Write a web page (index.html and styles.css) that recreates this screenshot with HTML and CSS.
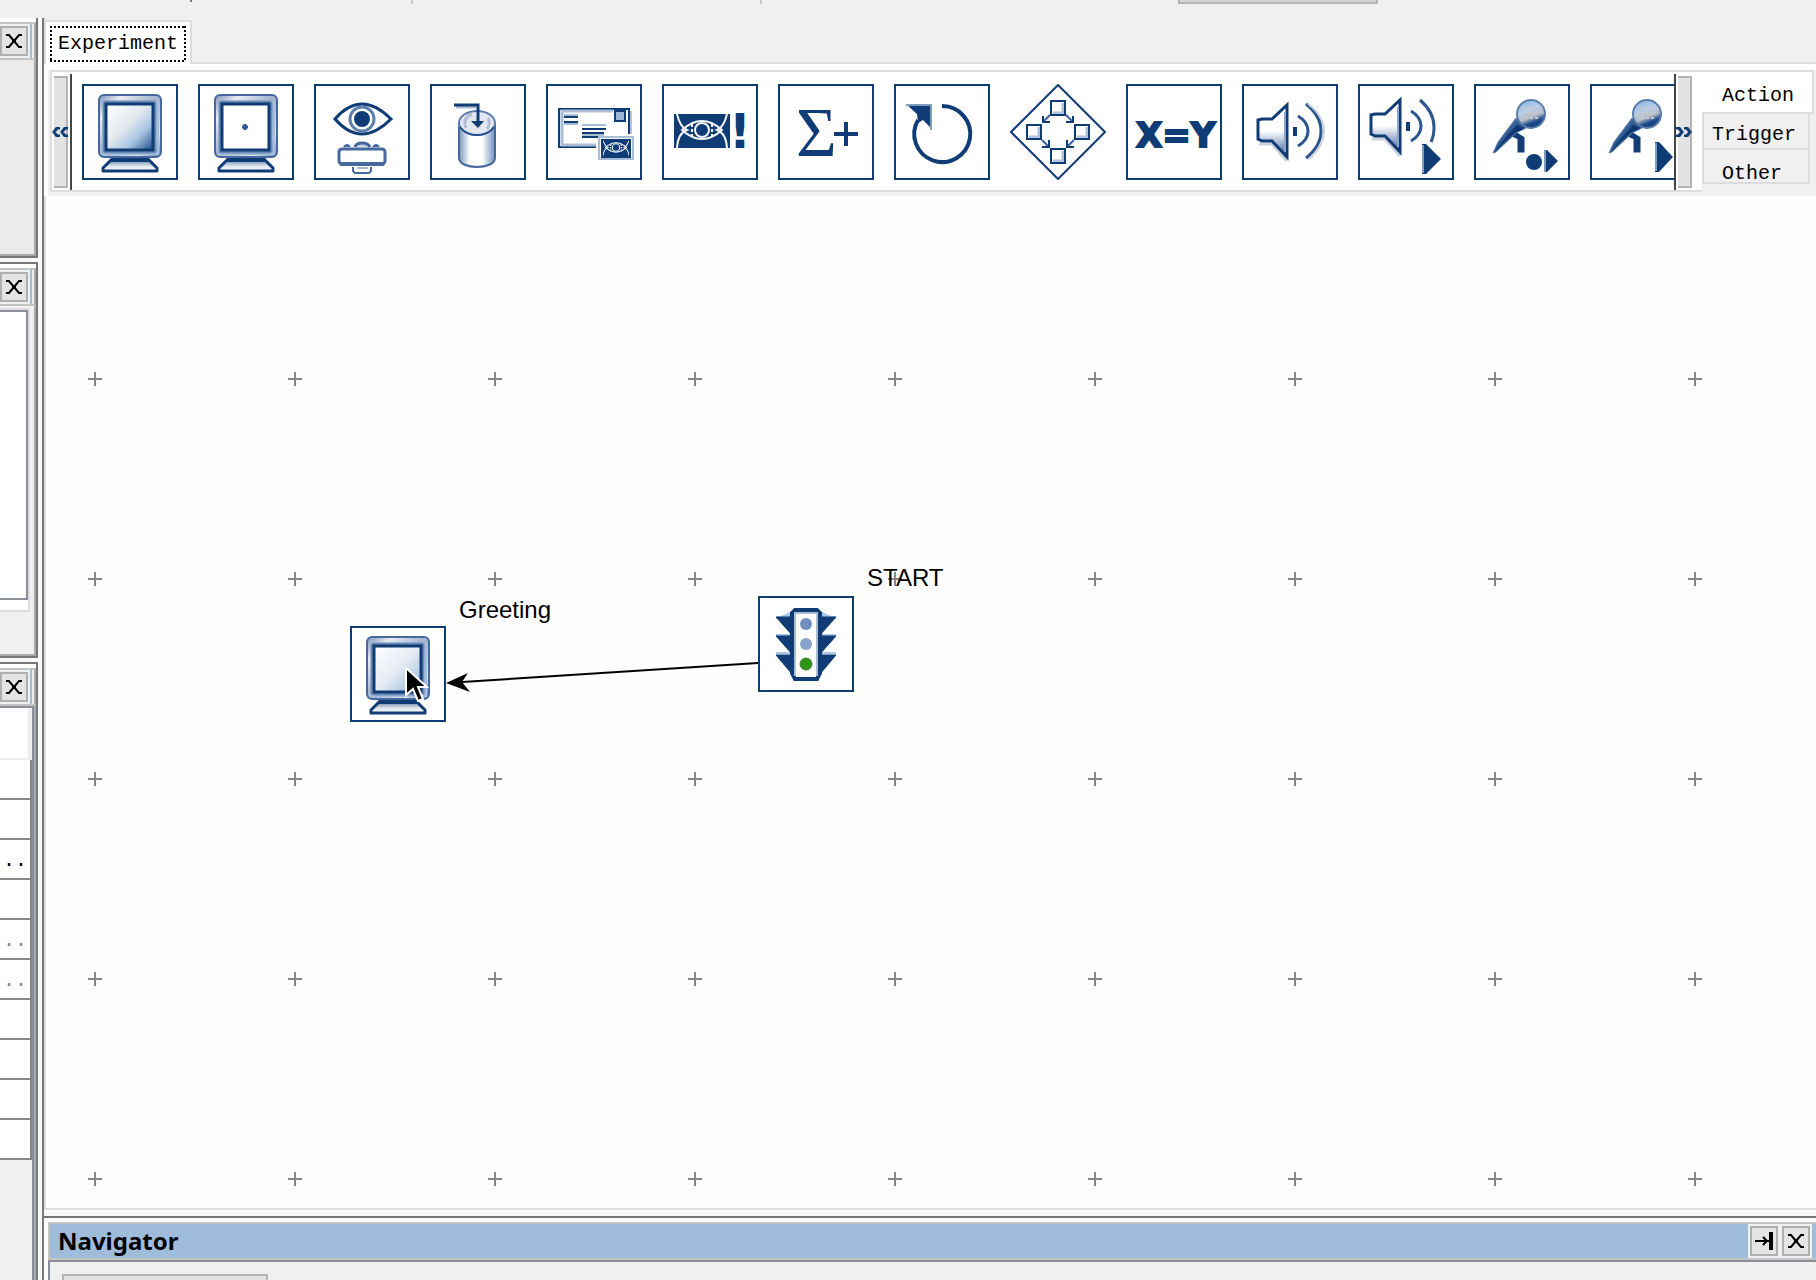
FILE: index.html
```html
<!DOCTYPE html>
<html lang="en">
<head>
<meta charset="utf-8">
<title>Experiment</title>
<link rel="stylesheet" href="styles.css">
</head>
<body>
<svg class="defs" aria-hidden="true">
  <defs>
    <linearGradient id="frame" x1="0" y1="0" x2="1" y2="1">
      <stop offset="0" stop-color="#7f93b8"/><stop offset=".2" stop-color="#e9ebf2"/><stop offset=".5" stop-color="#9fb2d0"/><stop offset=".8" stop-color="#dfe6f0"/><stop offset="1" stop-color="#5f86b5"/>
    </linearGradient>
    <linearGradient id="screen" x1="0" y1="0" x2="1" y2="1">
      <stop offset="0" stop-color="#ffffff"/><stop offset=".45" stop-color="#e3e9ef"/><stop offset=".7" stop-color="#a9c5e2"/><stop offset="1" stop-color="#1c4a86"/>
    </linearGradient>
    <linearGradient id="screen-light" x1="0" y1="0" x2="1" y2="1">
      <stop offset="0" stop-color="#ffffff"/><stop offset=".5" stop-color="#e6ecf4"/><stop offset="1" stop-color="#8fb4dc"/>
    </linearGradient>
    <linearGradient id="base" x1="0" y1="0" x2="0" y2="1">
      <stop offset="0" stop-color="#54759f"/><stop offset=".6" stop-color="#dfe5ee"/><stop offset="1" stop-color="#ffffff"/>
    </linearGradient>
    <linearGradient id="can" x1="0" y1="0" x2="1" y2="0">
      <stop offset="0" stop-color="#7b96bd"/><stop offset=".3" stop-color="#ffffff"/><stop offset=".65" stop-color="#ffffff"/><stop offset="1" stop-color="#6f8fb9"/>
    </linearGradient>
    <linearGradient id="cone" x1="0" y1="0" x2="0" y2="1">
      <stop offset="0" stop-color="#ffffff"/><stop offset=".5" stop-color="#ffffff"/><stop offset=".85" stop-color="#6f8cb8"/><stop offset="1" stop-color="#1d4880"/>
    </linearGradient>
    <linearGradient id="mic-head" x1=".3" y1="0" x2=".7" y2="1">
      <stop offset="0" stop-color="#8fb9e6"/><stop offset=".35" stop-color="#b6cde6"/><stop offset=".6" stop-color="#b9bdc6"/><stop offset=".78" stop-color="#1d4d8c"/><stop offset="1" stop-color="#0e3a75"/>
    </linearGradient>
    <linearGradient id="mic-body" x1="0" y1="0" x2="1" y2="1">
      <stop offset="0" stop-color="#7fa6d2"/><stop offset=".6" stop-color="#123f7a"/>
    </linearGradient>
    <pattern id="grid" width="200" height="200" patternUnits="userSpaceOnUse" x="-51" y="83">
      <path d="M93 100H107M100 93V107" stroke="#868686" stroke-width="2"/>
    </pattern>
  </defs>
  <symbol id="monitor" viewBox="2 2 92 92">
    <path d="M30 75H66L75 84V87H21V84Z" fill="url(#base)" stroke="#103c76" stroke-width="3" stroke-linejoin="round"/>
    <path d="M29 76H67" stroke="#103c76" stroke-width="4"/>
    <rect x="17" y="11" width="62" height="62" rx="5" fill="url(#frame)" stroke="#45699c" stroke-width="2"/>
    <path d="M20 70H76V16" fill="none" stroke="#a5bedd" stroke-width="2"/>
    <rect x="22" y="18" width="51" height="50" rx="2" fill="none" stroke="#6b8bb8" stroke-width="3"/>
  </symbol>
  <symbol id="speaker" viewBox="2 2 92 92" overflow="visible">
    <path d="M17 60H30L45 77" fill="none" stroke="#ccd2dc" stroke-width="3"/>
    <path d="M16 36L20 35H30L45 21V73L30 57H20L16 55Z" fill="url(#cone)" stroke="#103c76" stroke-width="3"/>
    <path d="M43 28V68" stroke="#8da5c8" stroke-width="2"/>
    <path d="M53 43V52" stroke="#103c76" stroke-width="4"/>
    <path d="M56 32Q66 38 66 47T56 62" fill="none" stroke="#2b568f" stroke-width="3"/>
  </symbol>
  <symbol id="mic" viewBox="2 2 92 92">
    <path d="M41 49L49 54V67H45V54L38 51Z" fill="#123f7a" stroke="#123f7a" stroke-width="3"/>
    <path d="M19 69L24 58L42 34L52 44L42 49L22 68Z" fill="url(#mic-body)" stroke="#5f82b0" stroke-width="1"/>
    <path d="M22 65L43 41L49 45L40 49Z" fill="#0d356e"/>
    <circle cx="57" cy="30" r="14" fill="url(#mic-head)" stroke="#5a7cab" stroke-width="2"/>
    <path d="M49 24H64M50 29H66M51 34H64" stroke="#c6c7c9" stroke-width="2" stroke-dasharray="3 2"/>
  </symbol>
  <symbol id="mask" viewBox="0 0 56 34">
    <path d="M0 0H56V34H0Z" fill="#103c76"/>
    <g fill="none" stroke="#f4f7fb" stroke-width="2">
      <path d="M3 0Q6 13 13 16Q4 19 3 34M53 0Q50 13 43 16Q52 19 53 34"/>
      <path d="M8 16Q18 7 28 7T48 16Q38 25 28 25T8 16Z"/>
      <circle cx="28" cy="16" r="7"/>
      <path d="M18 10V22M38 10V22" stroke-dasharray="3 2"/>
    </g>
  </symbol>
  <symbol id="close" viewBox="0 0 16 14"><path d="M0 1H3L13 13H16M0 13H3L13 1H16" fill="none" stroke="#000" stroke-width="2"/><path d="M6 7H10" stroke="#000" stroke-width="4"/></symbol>
  <symbol id="chevrons" viewBox="0 0 16 10"><path d="M8 1H5L2 5L5 9H8M16 1H13L10 5L13 9H16" fill="none" stroke="#103c76" stroke-width="3"/></symbol>
</svg>

<header class="topbar">
  <i class="tick"></i><i class="tick faint"></i><i class="tick faint"></i>
  <button class="topbar-button" aria-label="Toolbar option"></button>
</header>

<div class="workspace">
  <aside class="sidebar">
    <section class="dock dock-first">
      <div class="dock-title"><button class="square" aria-label="Close"><svg class="x"><use href="#close"/></svg></button></div>
      <div class="dock-body"></div>
    </section>
    <section class="dock dock-list">
      <div class="dock-title"><button class="square" aria-label="Close"><svg class="x"><use href="#close"/></svg></button></div>
      <div class="dock-body"><div class="list-frame"><div class="list"></div></div></div>
    </section>
    <section class="dock dock-props">
      <div class="dock-title"><button class="square" aria-label="Close"><svg class="x"><use href="#close"/></svg></button></div>
      <div class="dock-body">
        <div class="props-head"></div>
        <table class="props">
          <tbody>
            <tr><td></td></tr>
            <tr><td></td></tr>
            <tr><td>..</td></tr>
            <tr><td></td></tr>
            <tr><td class="muted">..</td></tr>
            <tr><td class="muted">..</td></tr>
            <tr><td></td></tr>
            <tr><td></td></tr>
            <tr><td></td></tr>
            <tr><td></td></tr>
          </tbody>
        </table>
      </div>
    </section>
  </aside>

  <main class="main">
    <div class="tabs">
      <button class="tab"><span class="tab-focus">Experiment</span></button>
      <div class="tabs-rest"></div>
    </div>

    <div class="palette">
      <div class="strip">
        <button class="scroll scroll-left" aria-label="Scroll left"><svg class="chev"><use href="#chevrons"/></svg></button>
        <div class="track">
          <button class="tool" aria-label="Display"><svg viewBox="2 2 92 92"><use href="#monitor" x="2" y="2" width="92" height="92"/><rect x="24" y="20" width="47" height="46" fill="url(#screen)" stroke="#103c76" stroke-width="3"/></svg></button>
          <button class="tool" aria-label="Fixation point"><svg viewBox="2 2 92 92"><use href="#monitor" x="2" y="2" width="92" height="92"/><rect x="24" y="20" width="47" height="46" fill="#fff" stroke="#103c76" stroke-width="3"/><path d="M44 43H50M47 40V46" stroke="#2c5790" stroke-width="3"/></svg></button>
          <button class="tool" aria-label="Eye tracker"><svg viewBox="2 2 92 92">
            <path d="M21 35Q34 20 48 20T77 35Q62 50 48 50T21 35Z" fill="#fff" stroke="#103c76" stroke-width="3"/>
            <circle cx="48" cy="35" r="12" fill="#fff" stroke="#5d7fae" stroke-width="3"/><circle cx="48" cy="35" r="8" fill="#103c76"/>
            <path d="M41 63Q42 59 48 59T56 63" fill="#c9d3e2" stroke="#45699c" stroke-width="3"/>
            <path d="M30 63Q33 59 36 63M59 63Q62 59 65 63" fill="#45699c" stroke="#45699c" stroke-width="2"/>
            <rect x="25" y="65" width="46" height="15" rx="3" fill="#fff" stroke="#45699c" stroke-width="3"/><path d="M26 80H70" stroke="#45699c" stroke-width="4"/>
            <path d="M39 83V87L41 89H55L57 87V83" fill="#fff" stroke="#45699c" stroke-width="2"/><path d="M43 84H54" stroke="#a9b8d0" stroke-width="2"/>
          </svg></button>
          <button class="tool" aria-label="Add to results"><svg viewBox="2 2 92 92">
            <path d="M29 39V74C29 86 65 86 65 74V39Z" fill="url(#can)" stroke="#45699c" stroke-width="2"/>
            <ellipse cx="47" cy="39" rx="18" ry="12" fill="#e3e8f0" stroke="#5d7fae" stroke-width="2"/>
            <path d="M36 44Q32 34 42 30M58 34Q61 40 57 45" fill="none" stroke="#b3c0d4" stroke-width="3"/>
            <path d="M30 43Q36 51 47 51T64 43" fill="none" stroke="#23508b" stroke-width="2"/>
            <path d="M26 23H46" stroke="#a9bdd6" stroke-width="3"/><path d="M24 21H48V40" fill="none" stroke="#103c76" stroke-width="3"/><path d="M41 37H54L48 44Z" fill="#103c76"/>
          </svg></button>
          <button class="tool" aria-label="Message"><svg viewBox="2 2 92 92">
            <path d="M85 27V50" stroke="#b3c3d8" stroke-width="2"/><path d="M83 50V25H13V63H50" fill="none" stroke="#103c76" stroke-width="2"/>
            <path d="M16 61V27H67M15 61H50" fill="none" stroke="#a9bdd6" stroke-width="3"/>
            <path d="M18 33H32M18 38H32M36 45H60M36 49H58M36 53H53" stroke="#103c76" stroke-width="2"/><path d="M18 31H32M18 40H32M36 41H60M36 51H58" stroke="#a9bdd6" stroke-width="2"/>
            <rect x="69" y="27" width="10" height="10" fill="#9db6d3" stroke="#103c76" stroke-width="2"/>
            <rect x="53" y="53" width="34" height="22" fill="#fff" stroke="#a9bdd6" stroke-width="2"/>
            <use href="#mask" x="55" y="55" width="30" height="18"/><path d="M56 56H84V73H56Z" fill="none" stroke="#103c76" stroke-width="2"/>
          </svg></button>
          <button class="tool" aria-label="Masked alert"><svg viewBox="2 2 92 92"><use href="#mask" x="12" y="30" width="56" height="34"/><circle cx="40" cy="46" r="5" fill="#103c76"/><text x="67" y="64" class="glyph mark">!</text></svg></button>
          <button class="tool" aria-label="Accumulate"><svg viewBox="2 2 92 92"><text x="18" y="72" class="glyph sigma">Σ</text><path d="M56 50H80M68 38V62" stroke="#103c76" stroke-width="4"/></svg></button>
          <button class="tool" aria-label="Loop"><svg viewBox="2 2 92 92">
            <path d="M48 22A28 28 0 1 1 24 36" fill="none" stroke="#103c76" stroke-width="4"/>
            <path d="M13 21L38 21V45L29 36L24 39L23 30Z" fill="#103c76"/><path d="M12 21H37V46" fill="none" stroke="#7f9cc2" stroke-width="2"/>
          </svg></button>
          <button class="tool tool-bare" aria-label="Switch"><svg viewBox="0 0 96 96">
            <path d="M48 1L95 48L48 95L1 48Z" fill="#fff" stroke="#103c76" stroke-width="2"/>
            <g fill="none" stroke="#b3c3dc" stroke-width="3"><path d="M43 29H53V19M19 53H29V43M67 53H77V43M43 77H53V67"/></g>
            <g fill="none" stroke="#103c76" stroke-width="2"><rect x="41" y="17" width="14" height="14"/><rect x="17" y="41" width="14" height="14"/><rect x="65" y="41" width="14" height="14"/><rect x="41" y="65" width="14" height="14"/>
            <path d="M40 31L33 38M33 32V38H40M56 31L63 38M56 38H63V32M32 56L39 63M39 56V63H32M64 56L57 63M57 56V63H64" stroke="#3c649b"/><path d="M33 32V38H40M56 38H63V32M39 56V63H32M57 56V63H64"/></g>
          </svg></button>
          <button class="tool" aria-label="Assign"><svg viewBox="2 2 92 92"><text x="10" y="63" class="glyph assign">X=Y</text></svg></button>
          <button class="tool" aria-label="Sound"><svg viewBox="2 2 92 92"><use href="#speaker" x="2" y="2" width="92" height="92"/><path d="M64 20Q79 32 79 47T64 74" fill="none" stroke="#2b568f" stroke-width="3"/><path d="M66 20Q82 32 82 47T66 76" fill="none" stroke="#ccd2dc" stroke-width="2"/></svg></button>
          <button class="tool" aria-label="Play sound"><svg viewBox="2 2 92 92"><use href="#speaker" x="-1" y="-3" width="92" height="92"/><path d="M62 16Q76 28 76 43Q76 52 73 58" fill="none" stroke="#2b568f" stroke-width="3"/><path d="M64 60H68L83 75L68 90H64Z" fill="#103c76"/><path d="M65 61V89" stroke="#7f9cc2" stroke-width="2"/></svg></button>
          <button class="tool" aria-label="Record and play"><svg viewBox="2 2 92 92"><use href="#mic" x="2" y="2" width="92" height="92"/><circle cx="60" cy="78" r="8" fill="#103c76"/><path d="M71 66H73L84 77L73 88H71Z" fill="#103c76"/><path d="M71 66V88" stroke="#7f9cc2" stroke-width="2"/></svg></button>
          <button class="tool" aria-label="Play recording"><svg viewBox="2 2 92 92"><use href="#mic" x="2" y="2" width="92" height="92"/><path d="M65 58H69L83 73L69 88H65Z" fill="#103c76"/><path d="M66 59V87" stroke="#7f9cc2" stroke-width="2"/></svg></button>
        </div>
        <button class="scroll scroll-right" aria-label="Scroll right"><svg class="chev"><use href="#chevrons"/></svg></button>
      </div>
      <div class="categories">
        <button class="category active">Action</button>
        <button class="category">Trigger</button>
        <button class="category">Other</button>
      </div>
    </div>

    <div class="canvas">
      <svg class="links">
        <rect width="100%" height="100%" fill="url(#grid)"/>
        <path d="M712 467L416 486" stroke="#000" stroke-width="2"/>
        <path d="M400 487L422 477L416 486L424 496Z" fill="#000"/>
      </svg>
      <div class="node greeting"><svg viewBox="2 2 92 92"><use href="#monitor" x="2" y="2" width="92" height="92"/><rect x="24" y="20" width="47" height="46" fill="url(#screen-light)" stroke="#103c76" stroke-width="3"/></svg></div>
      <span class="node-label greeting-label">Greeting</span>
      <div class="node start"><svg viewBox="2 2 92 92">
        <path d="M18 22H34V16L26 20ZM78 22H62V16L70 20ZM18 39H78M18 57H78" fill="#a9c5e8" stroke="#a9c5e8" stroke-width="2"/>
        <path d="M18 21H34V39ZM18 40H34V58ZM18 59H34V78ZM78 21H62V39ZM78 40H62V58ZM78 59H62V78Z" fill="#103c76" stroke="#103c76" stroke-width="1"/>
        <path d="M37 14H59L62 17V77L59 83H37L34 77V17Z" fill="#fff" stroke="#103c76" stroke-width="4"/>
        <path d="M37 80V17H59V80" fill="none" stroke="#a9bdd6" stroke-width="2"/>
        <circle cx="48" cy="28" r="6" fill="#6f90bd"/><circle cx="48" cy="48" r="6" fill="#86a4c9"/><circle cx="48" cy="68" r="6" fill="#2f960f" stroke="#4c7a4a"/>
      </svg></div>
      <span class="node-label start-label">START</span>
      <svg class="pointer" viewBox="0 0 24 38"><path d="M1 2V29L8 23L13 35L18 33L13 21H22Z" fill="#000" stroke="#fff" stroke-width="2"/></svg>
    </div>

    <section class="navigator">
      <div class="nav-title">
        <h2>Navigator</h2>
        <div class="nav-actions">
          <button class="square" aria-label="Pin"><svg class="pin" viewBox="0 0 18 18"><path d="M0 9H14M8 5L12 9L8 13" fill="none" stroke="#000" stroke-width="2"/><path d="M16 0V18" stroke="#000" stroke-width="4"/></svg></button>
          <button class="square" aria-label="Close"><svg class="x"><use href="#close"/></svg></button>
        </div>
      </div>
      <div class="nav-body"><button class="nav-button" aria-label="View"></button></div>
    </section>
  </main>
</div>
</body>
</html>
```
FILE: styles.css
```css
*, *::before { box-sizing: border-box; }

body {
  margin: 0;
  height: 100vh;
  overflow: hidden;
  display: flex;
  flex-direction: column;
  background: #f0f0f0;
  color: #000;
  font: 20px/24px "Liberation Mono", monospace;
}

button {
  margin: 0;
  padding: 0;
  border: 0;
  background: none;
  color: inherit;
  font: inherit;
}

svg { display: block; }
.defs { position: absolute; width: 0; height: 0; }

/* Top strip */
.topbar {
  flex: none;
  display: grid;
  grid-template-columns: 190px 221px 349px 418px 200px;
  height: 18px;
}
.tick {
  grid-row: 1;
  width: 2px;
  height: 2px;
  background: #777;
}
.tick:nth-child(1) { grid-column: 2; }
.tick:nth-child(2) { grid-column: 3; }
.tick:nth-child(3) { grid-column: 4; }
.tick.faint { height: 4px; background: #c8c8c8; }
.topbar-button {
  grid-row: 1;
  grid-column: 5;
  height: 4px;
  background: #d2d2d2;
  border: solid #b4b4b4;
  border-width: 0 2px 2px;
}

.workspace { flex: 1; min-height: 0; display: flex; }

/* Docked panels on the left */
.sidebar {
  flex: none;
  width: 42px;
  padding-right: 4px;
  display: flex;
  flex-direction: column;
  gap: 4px;
  background: #f8f8f8;
}
.dock {
  display: flex;
  flex-direction: column;
  padding-top: 4px;
  background: #fff;
  border: solid #777;
  border-width: 2px 2px 2px 0;
}
.dock-first { flex: none; height: 240px; border-top: 0; }
.dock-list { flex: none; height: 396px; }
.dock-props { flex: 1; border-bottom: 0; }
.dock-title {
  flex: none;
  height: 38px;
  padding: 2px 0;
  background: linear-gradient(90deg, #f0f0f0 30px, #9fbddb 30px 32px, #f0f0f0 32px);
  border: solid #c4c4c4;
  border-width: 2px 0;
  border-right: 2px solid #aaa;
}
.dock-body {
  flex: 1;
  background: #f0f0f0;
  border: solid #aaa;
  border-width: 0 2px 2px 0;
}
.dock-first .dock-body { background: #ebebea; }

.square {
  display: flex;
  align-items: center;
  justify-content: center;
  width: 28px;
  height: 30px;
  background: #e4e4e4;
  border: 2px solid #b0b0b0;
}
.x { width: 16px; height: 14px; }
.pin { width: 18px; height: 18px; }

.list-frame {
  width: 30px;
  height: 304px;
  margin-top: 2px;
  background: #fff;
  border: solid #ddd;
  border-width: 2px 2px 2px 0;
}
.list {
  height: 290px;
  border: solid #8a9099;
  border-width: 2px 2px 2px 0;
}

.dock-props .dock-body {
  border: solid #8a9099;
  border-width: 2px 2px 0 0;
  box-shadow: 2px 0 #aaa;
  margin-right: 2px;
}
.props-head {
  width: 32px;
  height: 52px;
  background: #fff;
  border: solid #eee;
  border-width: 0 4px 2px 0;
}
.props {
  width: 32px;
  border-collapse: separate;
  border-spacing: 0;
  background: #fff;
}
.props td {
  height: 40px;
  padding: 4px 0 0 3px;
  border: solid #868686;
  border-width: 0 2px 2px 0;
}
.props .muted { color: #888; }

/* Main column */
.main {
  flex: 1;
  min-width: 0;
  display: flex;
  flex-direction: column;
  background: #fff;
  border-left: 2px solid #777;
}

.tabs {
  flex: none;
  display: flex;
  height: 46px;
  padding-top: 2px;
  background: #f0f0f0;
  border-left: 2px solid #ddd;
}
.tab {
  width: 146px;
  background: #fff;
  border: solid #ddd;
  border-width: 2px 2px 0 0;
  padding: 4px;
}
.tab-focus {
  display: block;
  width: 136px;
  height: 36px;
  line-height: 36px;
  background:
    repeating-linear-gradient(90deg, #000 0 2px, transparent 2px 4px) top / 100% 2px no-repeat,
    repeating-linear-gradient(90deg, #000 0 2px, transparent 2px 4px) bottom / 100% 2px no-repeat,
    repeating-linear-gradient(#000 0 2px, transparent 2px 4px) left / 2px 100% no-repeat,
    repeating-linear-gradient(#000 0 2px, transparent 2px 4px) right / 2px 100% no-repeat;
}
.tabs-rest {
  flex: 1;
  border-bottom: 2px solid #ddd;
}

/* Icon palette */
.palette {
  flex: none;
  display: flex;
  margin: 6px 0 0 4px;
  padding: 0 2px 4px;
  background: #f0f0f0;
}
.strip {
  flex: 1;
  min-width: 0;
  display: flex;
  padding-top: 2px;
  background: #fff;
  border: solid #ddd;
  border-width: 2px 0 2px 2px;
}
.scroll {
  flex: none;
  display: flex;
  align-items: center;
  position: relative;
}
.scroll-left { width: 18px; }
.scroll-right { width: 26px; }
.scroll::before {
  content: "";
  position: absolute;
  left: 2px;
  top: 2px;
  width: 14px;
  height: 112px;
  background: #e2e2e2;
  border: solid #b4b4b4;
  border-width: 2px 2px 2px 0;
}
.chev { position: relative; width: 16px; height: 10px; }
.scroll-right .chev { transform: rotate(180deg); }
.track {
  flex: 1;
  min-width: 0;
  display: flex;
  gap: 20px;
  padding: 10px;
  overflow: hidden;
  border: solid #444;
  border-width: 0 2px;
}
.tool {
  flex: none;
  width: 96px;
  height: 96px;
  background: #fff;
  border: 2px solid #103c76;
}
.tool svg { width: 92px; height: 92px; }
.tool-bare { border: 0; }
.tool-bare svg { width: 96px; height: 96px; }
.glyph { fill: #103c76; }
.sigma { font: 70px "Liberation Serif", serif; }
.mark { font: bold 48px "DejaVu Sans", sans-serif; }
.assign {
  font: bold 34px "DejaVu Sans", sans-serif;
  stroke: #103c76;
  stroke-width: 2px;
}

.categories {
  flex: none;
  width: 112px;
  display: flex;
  flex-direction: column;
  padding-bottom: 8px;
}
.category {
  height: 36px;
  width: 108px;
  padding: 8px 0 0 8px;
  text-align: left;
  border: solid #ddd;
  border-width: 0 2px 2px;
}
.category.active {
  width: 112px;
  height: 44px;
  padding-left: 20px;
  background: #fff;
  border-width: 2px 2px 2px 0;
}
.category:last-child { padding: 12px 0 0 18px; height: 34px; }

/* Diagram */
.canvas {
  flex: 1;
  min-height: 0;
  position: relative;
  overflow: hidden;
  background: #fefefe;
  border: solid #ddd;
  border-width: 0 0 2px 2px;
}
.links { width: 100%; height: 100%; }
.node {
  position: absolute;
  width: 96px;
  height: 96px;
  background: #fff;
  border: 2px solid #103c76;
}
.node svg { width: 92px; height: 92px; }
.greeting { left: 304px; top: 430px; }
.start { left: 712px; top: 400px; }
.node-label {
  position: absolute;
  font: 24px/28px "Liberation Sans", Arial, sans-serif;
}
.greeting-label { left: 413px; top: 400px; }
.start-label { left: 821px; top: 368px; }
.pointer {
  position: absolute;
  left: 359px;
  top: 470px;
  width: 24px;
  height: 38px;
}

/* Navigator */
.navigator {
  flex: none;
  height: 64px;
  display: flex;
  flex-direction: column;
  padding: 4px 0 0 4px;
  border-top: 2px solid #777;
  margin-top: 6px;
  box-shadow: 0 -4px #f6f6f6;
}
.nav-title {
  flex: none;
  height: 38px;
  display: flex;
  align-items: center;
  justify-content: space-between;
  padding: 0 4px 0 8px;
  background: #9fbddb;
  border: solid #c4c4c4;
  border-width: 2px 0 2px 2px;
}
.nav-title h2 {
  margin: 0;
  font: bold 24px/34px "Noto Sans", "Open Sans", sans-serif;
}
.nav-actions {
  display: flex;
  gap: 4px;
  padding: 2px;
  background: #f0f0f0;
}
.nav-body {
  flex: 1;
  padding: 12px 0 0 12px;
  background: #f0f0f0;
  border: solid #8a9099;
  border-width: 2px 0 0 2px;
}
.nav-button {
  display: block;
  width: 206px;
  height: 14px;
  background: #e2e2e2;
  border: solid #b4b4b4;
  border-width: 2px 2px 0;
}
```
